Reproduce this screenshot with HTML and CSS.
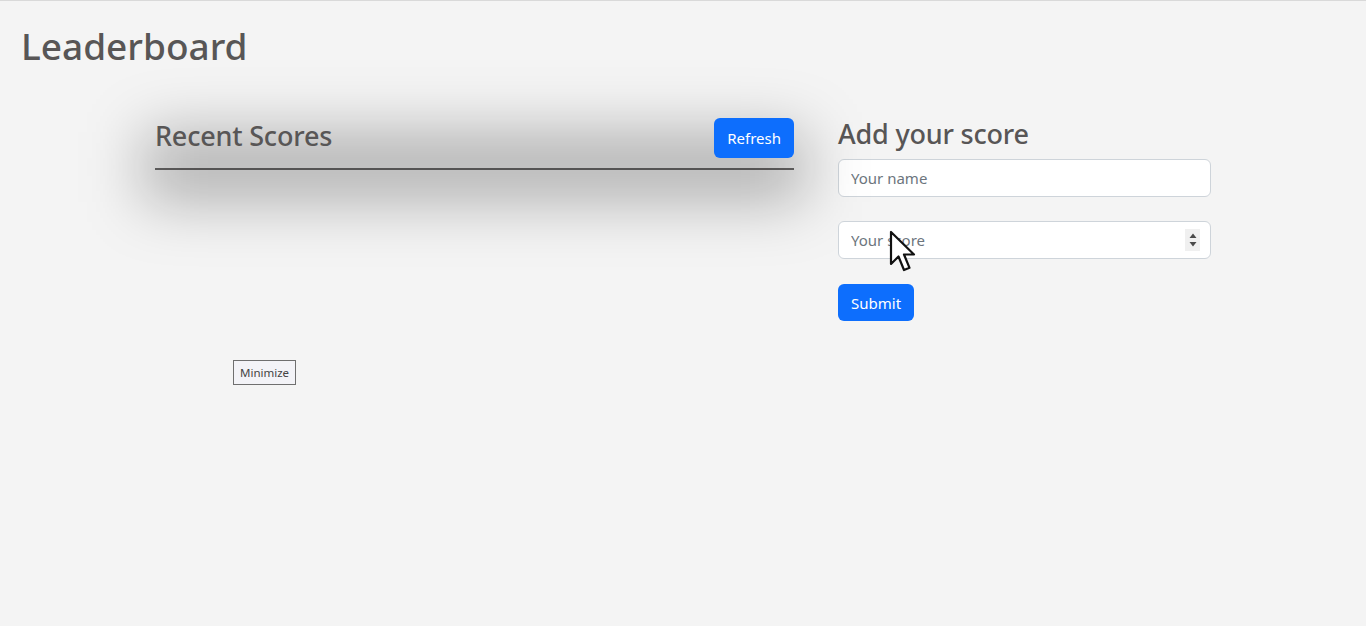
FILE: index.html
```html
<!DOCTYPE html>
<html>
<head>
<meta charset="utf-8">
<link rel="stylesheet" href="styles.css">
</head>
<body>
<div class="page">
  <h1 class="title">Leaderboard</h1>
  <div class="main">
    <section class="scores">
      <div class="scores-head">
        <h3 class="heading">Recent Scores</h3>
        <button class="btn btn-refresh">Refresh</button>
      </div>
      <button class="btn-min">Minimize</button>
    </section>
    <section class="form">
      <h3 class="heading form-heading">Add your score</h3>
      <input class="field" type="text" placeholder="Your name">
      <div class="num-wrap">
        <input class="field" type="text" placeholder="Your score">
        <span class="spin">
          <svg width="12" height="20" viewBox="0 0 12 20"><path d="M2.5 8 L6 3.5 L9.5 8 Z M2.5 12 L9.5 12 L6 16.5 Z" fill="#4a4a4a"/></svg>
        </span>
      </div>
      <button class="btn btn-submit">Submit</button>
    </section>
  </div>
</div>
<svg class="cursor" width="30" height="46" viewBox="0 0 30 46">
  <path d="M2 2 L2 34 L9.5 26.5 L15 40 L20.5 37.8 L15 24.5 L25 24.5 Z" fill="#fff" stroke="#111" stroke-width="2.2" stroke-linejoin="round"/>
</svg>
</body>
</html>
```
FILE: styles.css
```css
* { box-sizing: border-box; }
html, body { margin: 0; padding: 0; }
body {
  background: #f4f4f4;
  border-top: 1px solid #d9d9d9;
  font-family: "Noto Sans", "Open Sans", sans-serif;
  color: #585656;
  height: 626px;
  overflow: hidden;
  position: relative;
}
.page { padding: 0 21px; }
.title {
  margin: 18px 0 0;
  font-size: 37px;
  font-weight: 500;
  line-height: 54px;
  letter-spacing: 0;
}
.main {
  display: flex;
  justify-content: center;
  gap: 44px;
  margin-top: 45px;
}
.scores { width: 639px; }
.scores-head {
  position: relative;
  display: flex;
  align-items: flex-start;
  justify-content: space-between;
  border-bottom: 2px solid #6b6969;
  padding-bottom: 10px;
  isolation: isolate;
}
.scores-head::before {
  content: "";
  position: absolute;
  left: -12px;
  right: -12px;
  top: 14px;
  bottom: -34px;
  background: rgba(0, 0, 0, 0.27);
  filter: blur(30px);
  z-index: -1;
}
.heading {
  margin: 0;
  font-size: 27px;
  font-weight: 500;
  line-height: 36px;
  letter-spacing: -0.2px;
}
.btn {
  border: none;
  background: #0d6efd;
  color: #fff;
  font-family: inherit;
  font-size: 15px;
  border-radius: 6px;
  padding: 0 13px;
  height: 40px;
}
.btn-min {
  display: block;
  margin: 190px 0 0 78px;
  font-family: inherit;
  font-size: 11.5px;
  color: #444;
  background: #f3f3f7;
  border: 1px solid #6f6f6f;
  border-radius: 0;
  height: 25px;
  padding: 0 6px;
}
.form {
  width: 373px;
  display: flex;
  flex-direction: column;
  align-items: flex-start;
}
.form-heading { margin: -2px 0 7px; }
.field {
  width: 373px;
  height: 38px;
  border: 1px solid #ced4da;
  border-radius: 6px;
  background: #fff;
  font-family: inherit;
  font-size: 15px;
  padding: 0 12px;
  color: #333;
}
.field::placeholder { color: #6c757d; }
.num-wrap {
  position: relative;
  margin-top: 24px;
}
.spin {
  position: absolute;
  right: 11px;
  top: 8px;
  width: 15px;
  height: 22px;
  background: #f0f0f0;
  display: flex;
  align-items: center;
  justify-content: center;
}
.btn-submit {
  margin-top: 25px;
  height: 37px;
  padding: 0 13px;
}
.cursor {
  position: absolute;
  left: 889px;
  top: 229px;
}
```
